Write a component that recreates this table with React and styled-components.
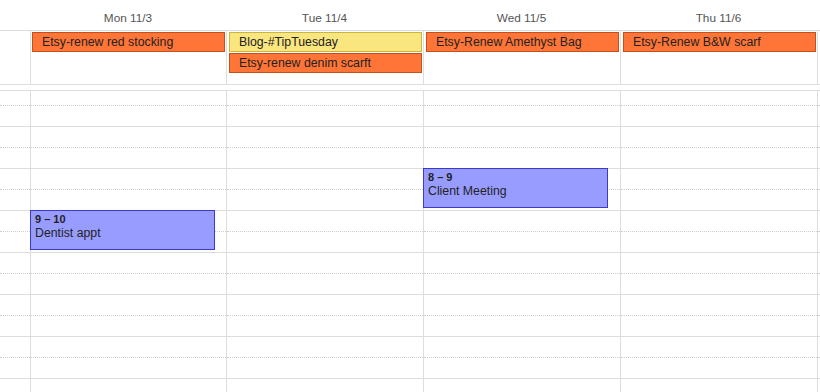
import React from "react";
import styled, { createGlobalStyle } from "styled-components";

const GlobalStyle = createGlobalStyle`
  html, body {
    margin: 0;
    padding: 0;
    background: #ffffff;
    overflow: hidden;
  }
  #root {
    width: 820px;
    height: 392px;
    overflow: hidden;
  }
  * { box-sizing: border-box; }
`;

const COLS = "30px 196px 197px 197px 197px 197px";
const FIRST_HOUR = 6;
const HOURS = [6, 7, 8, 9, 10, 11, 12, 13];
const HOUR_PX = 42;

const palette = {
  orange: { bg: "#ff7537", border: "#c1521d" },
  yellow: { bg: "#fae67f", border: "#c8b642" },
};

const days = [
  {
    label: "Mon 11/3",
    allDay: [{ title: "Etsy-renew red stocking", color: "orange" }],
    events: [{ start: 9, end: 10, time: "9 – 10", title: "Dentist appt" }],
  },
  {
    label: "Tue 11/4",
    allDay: [
      { title: "Blog-#TipTuesday", color: "yellow" },
      { title: "Etsy-renew denim scarft", color: "orange" },
    ],
    events: [],
  },
  {
    label: "Wed 11/5",
    allDay: [{ title: "Etsy-Renew Amethyst Bag", color: "orange" }],
    events: [{ start: 8, end: 9, time: "8 – 9", title: "Client Meeting" }],
  },
  {
    label: "Thu 11/6",
    allDay: [{ title: "Etsy-Renew B&W scarf", color: "orange" }],
    events: [],
  },
  {
    /* Friday is scrolled almost entirely out of view: only its edge shows */
    label: "",
    allDay: [{ title: "", color: "orange" }],
    events: [],
  },
];

const Calendar = styled.div`
  width: 1014px;
  font-family: "Liberation Sans", Arial, sans-serif;
  color: #222222;
`;

const HeaderRow = styled.div`
  display: grid;
  grid-template-columns: ${COLS};
  height: 31px;
  border-bottom: 1px solid #dddddd;
`;

const DayLabel = styled.div`
  text-align: center;
  padding-top: 11px;
  line-height: 15px;
  font-size: 11.8px;
  color: #555555;
  white-space: nowrap;
`;

const AllDayRow = styled.div`
  display: grid;
  grid-template-columns: ${COLS};
  height: 54px;
  border-bottom: 1px solid #dddddd;
`;

const Gutter = styled.div``;

const AllDayCell = styled.div`
  border-left: 1px solid #dddddd;
  padding: 1px 1px 0 ${(p) => (p.$first ? 1 : 2)}px;
  display: flex;
  flex-direction: column;
  gap: 1px;
  min-width: 0;
`;

const AllDayEvent = styled.div`
  height: 20px;
  border: 1px solid ${(p) => palette[p.$color].border};
  background: ${(p) => palette[p.$color].bg};
  padding: 0 9px;
  line-height: 18px;
  font-size: 12.3px;
  color: #222222;
  white-space: nowrap;
  overflow: hidden;
`;

const Spacer = styled.div`
  height: 5px;
`;

const Viewport = styled.div`
  border-top: 1px solid #dddddd;
  height: 302px;
  overflow: hidden;
`;

const TimeGrid = styled.div`
  display: grid;
  grid-template-columns: ${COLS};
  margin-top: -7px;
`;

const DayColumn = styled.div`
  position: relative;
  border-left: 1px solid #dddddd;
`;

const HourSlot = styled.div`
  height: ${HOUR_PX}px;
  display: flex;
  flex-direction: column;
`;

const HalfSlot = styled.div`
  height: ${HOUR_PX / 2}px;
  border-top: 1px ${(p) => (p.$half ? "dotted #cfcfcf" : "solid #dddddd")};
`;

const TimedEvent = styled.div`
  position: absolute;
  left: -1px;
  width: 185px;
  border: 1px solid #3a3acc;
  background: #999cff;
  padding: 2px 4px 1px;
  color: #222222;
  overflow: hidden;
`;

const EventTime = styled.div`
  font-size: 11px;
  font-weight: bold;
  line-height: 13px;
`;

const EventTitle = styled.div`
  font-size: 12.3px;
  line-height: 14px;
  white-space: nowrap;
`;

function Hours() {
  return HOURS.map((h) => (
    <HourSlot key={h}>
      <HalfSlot />
      <HalfSlot $half />
    </HourSlot>
  ));
}

export default function App() {
  return (
    <>
      <GlobalStyle />
      <Calendar>
        <HeaderRow>
          <Gutter />
          {days.map((d, i) => (
            <DayLabel key={i}>{d.label}</DayLabel>
          ))}
        </HeaderRow>
        <AllDayRow>
          <Gutter />
          {days.map((d, i) => (
            <AllDayCell key={i} $first={i === 0}>
              {d.allDay.map((e, j) => (
                <AllDayEvent key={j} $color={e.color}>
                  {e.title}
                </AllDayEvent>
              ))}
            </AllDayCell>
          ))}
        </AllDayRow>
        <Spacer />
        <Viewport>
          <TimeGrid>
            <Gutter>
              <Hours />
            </Gutter>
            {days.map((d, i) => (
              <DayColumn key={i}>
                <Hours />
                {d.events.map((e) => (
                  <TimedEvent
                    key={e.title}
                    style={{
                      top: (e.start - FIRST_HOUR) * HOUR_PX,
                      height: (e.end - e.start) * HOUR_PX - 2,
                    }}
                  >
                    <EventTime>{e.time}</EventTime>
                    <EventTitle>{e.title}</EventTitle>
                  </TimedEvent>
                ))}
              </DayColumn>
            ))}
          </TimeGrid>
        </Viewport>
      </Calendar>
    </>
  );
}
